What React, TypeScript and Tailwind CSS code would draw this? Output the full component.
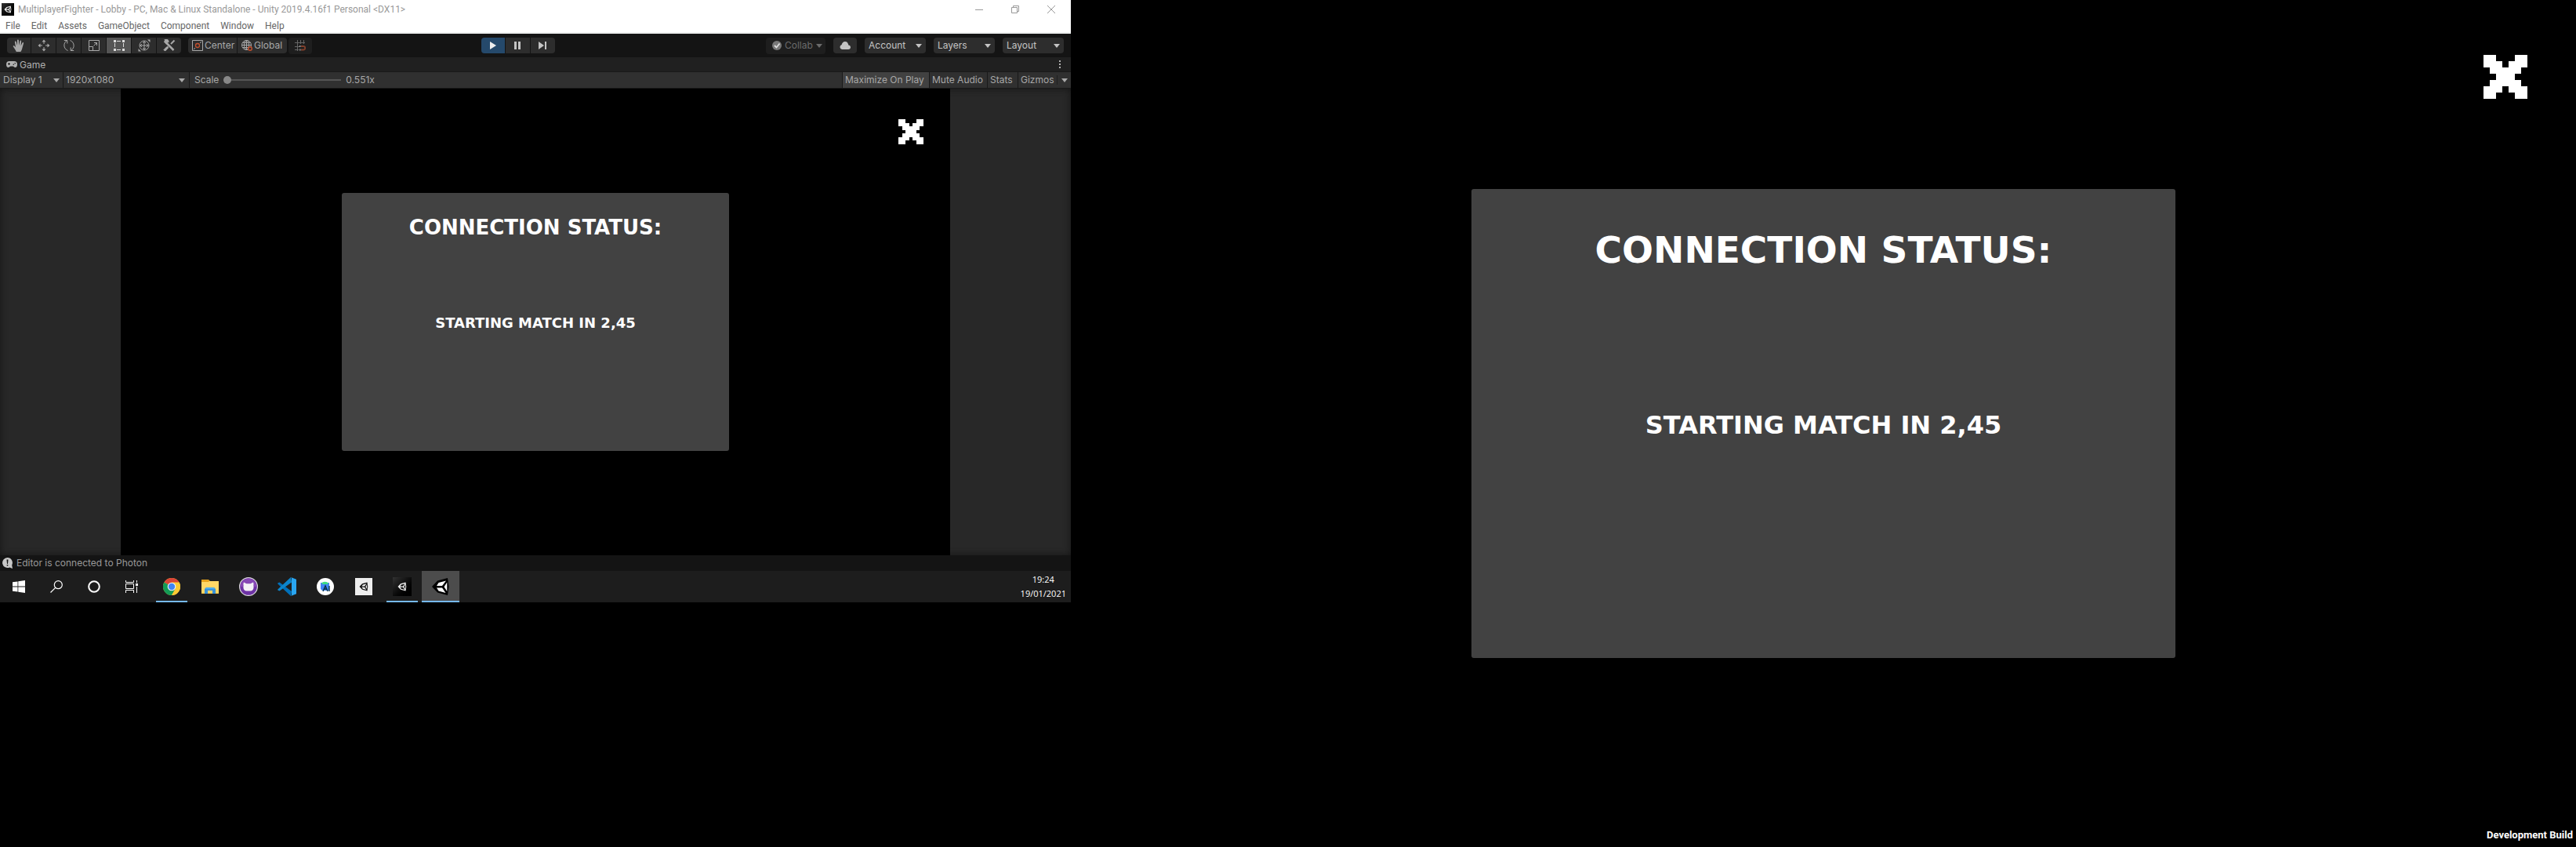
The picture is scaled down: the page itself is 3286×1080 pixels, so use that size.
import type { ReactNode } from "react";

function Caret({ className = "" }: { className?: string }) {
  return (
    <svg viewBox="0 0 8 5" className={`h-[5px] w-2 fill-current ${className}`} aria-hidden="true">
      <path d="M0 0h8L4 5z" />
    </svg>
  );
}

function Dropdown({ label, value, className, caret }: { label: string; value: string; className: string; caret: string }) {
  return (
    <div className={`relative flex items-center ${className}`}>
      <select aria-label={label} className="size-full appearance-none bg-transparent outline-none">
        <option>{value}</option>
      </select>
      <Caret className={`pointer-events-none absolute ${caret}`} />
    </div>
  );
}

function UnityMark({ fill, line, className }: { fill: string; line: string; className: string }) {
  return (
    <svg viewBox="0 0 24 24" className={className} aria-hidden="true">
      <path d="M1 12 8 4.500 21 1l1.500 11L21 23 8 19.500z" fill={line} />
      <path d="M9.500 7 19 4.500 14 11H7zM7 13.500h7L18.500 20 9.500 17.500zM16.500 12.300 20.300 6.500v11.500z" fill={fill} />
    </svg>
  );
}

const tools: { name: string; icon: ReactNode }[] = [
  {
    name: "Hand",
    icon: (
      <path
        fill="currentColor"
        stroke="none"
        d="M4.800 16C3.500 13.500 2 11 .8 9.300c-.5-.9.800-1.500 1.500-.8L4 10.200 2.900 3.600c-.2-1.300 1.400-1.500 1.700-.3L5.900 8 6 1.600C6 .2 7.800.2 7.900 1.600L8.200 8l1.200-5.600c.3-1.300 1.900-1 1.700.3L10.600 8.600l1.800-3.900c.6-1.100 2-.5 1.600.7-.8 2.500-1.300 5-2 7.300-.4 1.400-1 2.300-1.600 3.300z"
      />
    ),
  },
  {
    name: "Move",
    icon: (
      <>
        <path d="M8 2v4M8 10v4M2 8h4M10 8h4" />
        <path d="M5.500 3.500 8 .5l2.500 3zM5.500 12.500 8 15.500l2.500-3zM3.500 5.500.5 8l3 2.500zM12.500 5.500l3 2.500-3 2.500z" fill="currentColor" stroke="none" />
      </>
    ),
  },
  {
    name: "Rotate",
    icon: <path d="M6.500 14.500C.5 12 .5 4.500 5.500 1.500M1.800 1.500h4v4M9.500 1.500c6 2.500 6 10 1 13M14.200 14.500h-4v-4" />,
  },
  { name: "Scale", icon: <path d="M1.500 1.500h13v13h-13zM1.500 9.500h5v5M7.500 8.500l4-4M8 4.500h3.500V8" /> },
  {
    name: "Rect",
    icon: (
      <>
        <path d="M5 2.500h6M5 13.500h6M2.500 5v6M13.500 5v6" strokeDasharray="5 1" />
        <path d="M1 1h3v3H1zM12 1h3v3h-3zM1 12h3v3H1zM12 12h3v3h-3z" fill="currentColor" stroke="none" />
      </>
    ),
  },
  {
    name: "Transform",
    icon: (
      <>
        <circle cx="8" cy="8" r="6" />
        <path d="M8 2.500v11M2.500 8h11M6 5l2-2 2 2M6 11l2 2 2-2M5 6 3 8l2 2M11 6l2 2-2 2" />
        <path d="M12 .5h3.500V4zM.5 12v3.500H4z" fill="currentColor" stroke="none" />
      </>
    ),
  },
  {
    name: "Custom tools",
    icon: (
      <>
        <path d="M4 4.500 13.500 14" strokeWidth="2.500" />
        <path d="M1.500 2.500 4 5 5.500 3.500 3 1c2-.8 4 .5 3.500 3M14.500 1.500 10 6M6.500 9.500 2 14.500" strokeWidth="2" />
        <path d="M5 9.500 1 13.500 2.500 15 6.500 11" fill="currentColor" />
      </>
    ),
  },
];

function PixelCross({ className }: { className: string }) {
  return (
    <svg viewBox="0 0 7 7" className={className} fill="white" shapeRendering="crispEdges" aria-hidden="true">
      <path d="M0 0h2v1h1v1h1V1h1V0h2v2H6v1H5v1h1v1h1v2H5V6H4V5H3v1H2v1H0V5h1V4h1V3H1V2H0z" />
    </svg>
  );
}

function Lobby({ large = false }: { large?: boolean }) {
  return (
    <section className="relative flex aspect-video w-full items-center justify-center bg-black text-white">
      <button aria-label="Close" className="absolute top-[6.5%] right-[3.25%]">
        <PixelCross className={large ? "size-14" : "size-8"} />
      </button>
      <div
        className={`flex h-[55.3%] w-[46.75%] flex-col items-center rounded-[3px] bg-[#424242] text-center font-['DejaVu_Sans'] font-bold whitespace-nowrap uppercase ${
          large ? "gap-[175px] pt-[50px]" : "gap-24 pt-7"
        }`}
      >
        <h2 className={large ? "text-[47px] leading-[56px]" : "text-[26px] leading-8"}>Connection Status:</h2>
        <p className={large ? "text-[32px] leading-10" : "text-[18px] leading-5"}>Starting match in 2,45</p>
      </div>
    </section>
  );
}

function TitleBar() {
  return (
    <header className="border-b-2 border-[#eef0ef] bg-white font-['Roboto'] text-xs">
      <div className="flex h-6 items-center text-[#999]">
        <span className="ml-0.5 grid size-4 place-items-center bg-gradient-to-br from-[#333] to-black">
          <UnityMark fill="#111" line="#eee" className="size-2.5" />
        </span>
        <h1 className="ml-[5px] flex-1 whitespace-nowrap">
          MultiplayerFighter - Lobby - PC, Mac &amp; Linux Standalone - Unity 2019.4.16f1 Personal &lt;DX11&gt;
        </h1>
        <button aria-label="Minimize" className="grid w-[46px] place-items-center">
          <svg viewBox="0 0 10 10" className="size-2.5" stroke="currentColor" fill="none"><path d="M0 5.500h10" /></svg>
        </button>
        <button aria-label="Restore" className="grid w-[46px] place-items-center">
          <svg viewBox="0 0 10 10" className="size-2.5" stroke="currentColor" fill="none"><path d="M.5 2.500h7v7h-7zM2.500 2.500v-2h7v7h-2" /></svg>
        </button>
        <button aria-label="Close window" className="mr-[2px] grid w-[46px] place-items-center">
          <svg viewBox="0 0 10 10" className="size-2.5" stroke="currentColor" fill="none"><path d="M0 0l10 10M10 0L0 10" /></svg>
        </button>
      </div>
      <nav className="flex h-[17px] items-center gap-3.5 pl-[7px] text-[#666]">
        {["File", "Edit", "Assets", "GameObject", "Component", "Window", "Help"].map((m) => (
          <button key={m}>{m}</button>
        ))}
      </nav>
    </header>
  );
}

function Toolbar() {
  return (
    <div className="flex h-[30px] items-center bg-[#141414] text-[#c4c4c4]">
      <div className="flex gap-px pl-[9px] text-[#a8a8a8]">
        {tools.map((t) => (
          <button
            key={t.name}
            aria-label={t.name}
            className={`grid h-5 w-[31px] place-items-center first:w-[30px] first:rounded-l-sm last:rounded-r-sm ${t.name === "Rect" ? "bg-[#555] text-[#ddd]" : "bg-[#2d2d2d]"}`}
          >
            <svg viewBox="0 0 16 16" className="size-4" fill="none" stroke="currentColor">{t.icon}</svg>
          </button>
        ))}
      </div>
      <div className="ml-[9px] flex gap-px text-[#a8a8a8]">
        <button className="flex h-5 w-[62px] items-center gap-0.5 rounded-l-sm bg-[#2d2d2d] pl-[5px]">
          <svg viewBox="0 0 14 14" className="size-3.5 shrink-0" fill="none" stroke="currentColor">
            <path d="M.5.500h13v13H.5zM2 12l2-2M10 4l2-2" />
            <circle cx="7" cy="7" r="2.500" stroke="#c4502e" strokeWidth="1.300" />
          </svg>
          Center
        </button>
        <button className="flex h-5 w-[63px] items-center gap-0.5 rounded-r-sm bg-[#2d2d2d] pl-[5px]">
          <svg viewBox="0 0 14 14" className="size-3.5 shrink-0" fill="none" stroke="currentColor">
            <circle cx="6.500" cy="6.500" r="6" />
            <ellipse cx="6.500" cy="6.500" rx="3" ry="6" />
            <path d="M.5 6.500h12M1.500 3.500h10M1.500 9.500h8M6.500.5v12" />
            <circle cx="11" cy="11" r="2.300" stroke="#c4502e" strokeWidth="1.400" fill="#2d2d2d" />
          </svg>
          Global
        </button>
      </div>
      <button aria-label="Grid snapping" className="ml-0.5 grid h-[21px] w-[30px] place-items-center rounded-sm bg-[#1e1e1e] text-[#666]">
        <svg viewBox="0 0 14 14" className="size-3.5" fill="none" stroke="currentColor">
          <path d="M3.500 0v14M7.500 0v5M11.500 0v5M0 3.500h13M0 8.500h6M0 12.500h5" />
          <path d="M8 8h3a2.200 2.200 0 0 1 0 4.500H8" stroke="#80402c" strokeWidth="2" />
          <path d="M6 7h1.500v2H6zM6 11.500h1.500v2H6z" fill="#999" stroke="none" />
        </svg>
      </button>
      <div className="flex-4" />
      <div className="flex gap-px">
        <button aria-label="Play" className="grid h-5 w-[30px] place-items-center rounded-l-sm bg-[#25496b] text-[#eee]">
          <svg viewBox="0 0 10 10" className="size-2.5 fill-current"><path d="M1 0v10l8-5z" /></svg>
        </button>
        <button aria-label="Pause" className="grid h-5 w-[31px] place-items-center bg-[#2d2d2d]">
          <svg viewBox="0 0 10 10" className="size-2.5 fill-current"><path d="M1 0h3v10H1zM6 0h3v10H6z" /></svg>
        </button>
        <button aria-label="Step" className="grid h-5 w-[31px] place-items-center rounded-r-sm bg-[#2d2d2d]">
          <svg viewBox="0 0 10 10" className="size-2.5 fill-current"><path d="M0 0v10l7-5zM8 0h2v10H8z" /></svg>
        </button>
      </div>
      <div className="flex-5" />
      <div className="flex items-center gap-2.5 pr-[9px]">
        <button className="flex h-[21px] w-[76px] items-center gap-1 rounded-sm bg-[#1e1e1e] pl-2 text-[#6b6b6b]">
          <svg viewBox="0 0 12 12" className="size-3 shrink-0"><circle cx="6" cy="6" r="6" fill="#777" /><path d="M3 6l2.500 2.500L9.500 3.500" stroke="#ddd" strokeWidth="1.800" fill="none" /></svg>
          Collab
          <Caret />
        </button>
        <button aria-label="Cloud services" className="grid h-5 w-[30px] place-items-center rounded-sm bg-[#2d2d2d]">
          <svg viewBox="0 0 14 10" className="h-2.5 w-3.5 fill-current"><path d="M3.300 10a3 3 0 0 1-.6-5.900C3 1.700 4.800 0 7 0c2.100 0 3.400 1.200 4 3.300.3 1 .2 1.200.2 1.200 1.600 0 2.800 1.200 2.800 2.800S12.900 10 11.200 10z" /></svg>
        </button>
        {["Account", "Layers", "Layout"].map((v) => (
          <Dropdown key={v} label={v} value={v} className="h-5 w-[78px] rounded-sm bg-[#2d2d2d] pl-[5px]" caret="right-[5px]" />
        ))}
      </div>
    </div>
  );
}

function GameTab() {
  return (
    <>
      <div className="flex h-[18px] items-center gap-[3px] bg-[#202020] pr-[13px] pl-2 text-[#b0b0b0]">
        <svg viewBox="0 0 14 8" className="h-2 w-3.5" aria-hidden="true">
          <path d="M4 0h6a4 4 0 0 1 4 4c0 2.500-1 4-2.500 4C10 8 9.500 6.500 8.500 6.500h-3C4.500 6.500 4 8 2.500 8 1 8 0 6.500 0 4a4 4 0 0 1 4-4z" fill="currentColor" />
          <path d="M2 3.500h3M3.500 2v3" stroke="#202020" />
          <circle cx="9.300" cy="4.300" r=".8" fill="#202020" />
          <circle cx="11.200" cy="2.800" r=".8" fill="#202020" />
        </svg>
        <span className="flex-1 pt-0.5 leading-4">Game</span>
        <button aria-label="Tab options">
          <svg viewBox="0 0 2 10" className="h-2.5 w-0.5 fill-current"><path d="M0 0h2v2H0zM0 4h2v2H0zM0 8h2v2H0z" /></svg>
        </button>
      </div>
      <div className="flex h-[22px] items-stretch border-y border-[#191919] bg-[#303030] text-left text-[#a8a8a8]">
        <Dropdown label="Display" value="Display 1" className="w-20 pl-1" caret="right-1" />
        <Dropdown label="Resolution" value="1920x1080" className="w-[161px] border-l border-[#191919] pl-[3px]" caret="right-[5px]" />
        <label className="flex flex-1 items-center gap-1.5 border-l border-[#191919] pl-1.5">
          Scale
          <input
            type="range"
            min={0}
            max={100}
            defaultValue={0}
            className="h-0.5 w-[150px] appearance-none bg-[#555] [&::-webkit-slider-thumb]:size-2.5 [&::-webkit-slider-thumb]:appearance-none [&::-webkit-slider-thumb]:rounded-full [&::-webkit-slider-thumb]:bg-[#888]"
          />
          0.551x
        </label>
        <button className="w-[111px] border-l border-[#191919] bg-[#414141] pl-[3px] text-left">Maximize On Play</button>
        <button className="w-[74px] border-l border-[#191919] pl-[3px] text-left">Mute Audio</button>
        <button className="w-[39px] border-l border-[#191919] pl-[3px] text-left">Stats</button>
        <button className="w-[50px] border-l border-[#191919] pl-[3px] text-left">Gizmos</button>
        <button aria-label="Gizmo options" className="my-1 grid w-[18px] place-items-center border-l border-[#202020]"><Caret /></button>
      </div>
    </>
  );
}

const apps: { name: string; className: string; icon: ReactNode }[] = [
  {
    name: "Chrome",
    className: "w-10 mx-1 border-b-2 border-[#76b9ed] pt-0.5",
    icon: (
      <svg viewBox="0 0 24 24" className="size-[22px]">
        <circle cx="12" cy="12" r="12" fill="#fcc934" />
        <path d="M12 12 1.600 6A12 12 0 0 1 22.400 6z" fill="#db4437" />
        <path d="M12 12 1.600 6A12 12 0 0 0 12 24l5.200-9z" fill="#149b56" />
        <path d="M12 6h10.400A12 12 0 0 1 12 24l5.200-9z" fill="#fcc934" />
        <circle cx="12" cy="12" r="5.800" fill="#f5f5f5" />
        <circle cx="12" cy="12" r="4.600" fill="#4285f4" />
      </svg>
    ),
  },
  {
    name: "File Explorer",
    className: "w-12",
    icon: (
      <svg viewBox="0 0 22 19" className="h-[19px] w-[22px]">
        <path d="M0 0h9l2 2h11v16H0z" fill="#e7a31c" />
        <path d="M0 3h9l1-1h12v15.500H0z" fill="#ffd766" />
        <path d="M4 18v-6l2-2h10l2 2v6h-4v-4H8v4z" fill="#3a93d8" />
        <path d="M6 10h10l1 2H5z" fill="#4fadea" />
      </svg>
    ),
  },
  {
    name: "GitHub Desktop",
    className: "w-12",
    icon: (
      <svg viewBox="0 0 24 24" className="size-6">
        <circle cx="12" cy="12" r="11.400" fill="#6e33a5" stroke="#ddd" strokeWidth="1.200" />
        <path d="M1.500 12a10.500 10.500 0 0 1 21 0z" fill="#8748b5" />
        <path d="M6 6.500l3.500 1.700h5L18 6.500c.7 1.500.6 3 .3 4 .8 3.500-.3 6.500-3.300 7H9c-3-.5-4.100-3.500-3.300-7-.3-1-.4-2.500.3-4z" fill="#f4f1f6" />
      </svg>
    ),
  },
  {
    name: "Visual Studio Code",
    className: "w-12",
    icon: (
      <svg viewBox="0 0 24 24" className="size-6">
        <path d="M17 24 .3 8.500v-1L2.500 6.500 18 18z" fill="#0070ba" />
        <path d="M.3 15.500 17 0l1 6.500L2.500 17.500l-2.200-1z" fill="#0c85cc" />
        <path d="M17 0l7 2.800v18.400L17 24l1-1V1z" fill="#29a5f0" />
      </svg>
    ),
  },
  {
    name: "Android Studio",
    className: "w-12",
    icon: (
      <svg viewBox="0 0 22 22" className="size-[22px]">
        <circle cx="11" cy="11" r="11" fill="#fff" />
        <path d="M5 6h11v10H7l-2-2z" fill="#4285f4" />
        <path d="M6 7a5 4 0 0 1 9 0l-1 1H8z" fill="#3ddc84" />
        <path d="M8 17l3-7 3 7M9.500 14h3M16 10v7" stroke="#073042" strokeWidth="1.400" fill="none" />
      </svg>
    ),
  },
  {
    name: "Unity Hub",
    className: "w-12",
    icon: (
      <span className="grid size-[22px] place-items-center bg-[#eee]">
        <UnityMark fill="#eee" line="#111" className="size-3" />
      </span>
    ),
  },
  {
    name: "Game build",
    className: "w-10 mx-1 border-b-2 border-[#76b9ed] pt-0.5",
    icon: (
      <span className="grid size-6 place-items-center bg-gradient-to-br from-[#333] to-black">
        <UnityMark fill="#111" line="#eee" className="size-3" />
      </span>
    ),
  },
  {
    name: "Unity Editor",
    className: "w-12 bg-[#4c4c4c] border-b-2 border-[#76b9ed] pt-0.5",
    icon: <UnityMark fill="#fff" line="#000" className="size-6" />,
  },
];

function Taskbar() {
  return (
    <footer className="flex h-10 items-stretch bg-[#1d1d1d] text-white">
      <button aria-label="Start" className="grid w-12 place-items-center">
        <svg viewBox="0 0 16 16" className="size-4 fill-current"><path d="M0 2.300 6.500 1.400v6.200H0zM7.300 1.300 16 0v7.600H7.300zM0 8.400h6.500v6.200L0 13.700zM7.300 8.400H16V16l-8.700-1.300z" /></svg>
      </button>
      <button aria-label="Search" className="grid w-12 place-items-center">
        <svg viewBox="0 0 16 16" className="size-4" fill="none" stroke="currentColor" strokeWidth="1.200"><circle cx="10.300" cy="5.700" r="5" /><path d="M6.700 9.300.5 15.500" /></svg>
      </button>
      <button aria-label="Cortana" className="grid w-12 place-items-center">
        <svg viewBox="0 0 16 16" className="size-4" fill="none" stroke="currentColor" strokeWidth="2"><circle cx="8" cy="8" r="6.800" /></svg>
      </button>
      <button aria-label="Task view" className="grid w-12 place-items-center">
        <svg viewBox="0 0 16 16" className="size-4" fill="none" stroke="currentColor">
          <path d="M.5 0v2.500h10V0M.5 4.500h10v6H.5zM.5 16v-3.500h10V16M14.500 0v3M14.500 8v8" />
          <path d="M13 4h3v3h-3z" fill="currentColor" stroke="none" />
        </svg>
      </button>
      <div className="ml-[3px] flex items-stretch gap-px">
        {apps.map((a) => (
          <button key={a.name} aria-label={a.name} className={`grid place-items-center ${a.className}`}>{a.icon}</button>
        ))}
      </div>
      <time className="ml-auto flex flex-col justify-center pr-1.5 text-center font-['Open_Sans'] text-[11px] leading-[18px]">
        <span>19:24</span>
        <span>19/01/2021</span>
      </time>
    </footer>
  );
}

export default function App() {
  return (
    <main className="grid min-h-screen grid-cols-[1366fr_1920fr] items-start overflow-hidden bg-black">
      <div className="min-w-0 font-['Inter'] text-xs leading-4 [font-feature-settings:'calt'_0]">
        <TitleBar />
        <Toolbar />
        <GameTab />
        <div className="flex justify-center bg-[#282828] shadow-[inset_0_0_10px_#151515]">
          <div className="w-[77.45%]"><Lobby /></div>
        </div>
        <div className="flex h-5 items-center gap-1 bg-[#141414] pl-[3px] text-[#999]">
          <svg viewBox="0 0 14 14" className="size-3.5" aria-hidden="true">
            <path d="M6.500 0a6.500 6.500 0 1 0 2.800 12.400L13 14l-.8-4.500A6.500 6.500 0 0 0 6.500 0z" fill="#c8c8c8" />
            <path d="M5.500 2.500h2L7 8H6zM5.700 9h1.600v1.600H5.700z" fill="#141414" />
          </svg>
          Editor is connected to Photon
        </div>
        <Taskbar />
      </div>
      <div className="relative min-w-0">
        <Lobby large />
        <p className="absolute right-1 bottom-1.5 font-['Roboto'] text-[13px] leading-[18px] font-bold text-white">Development Build</p>
      </div>
    </main>
  );
}
